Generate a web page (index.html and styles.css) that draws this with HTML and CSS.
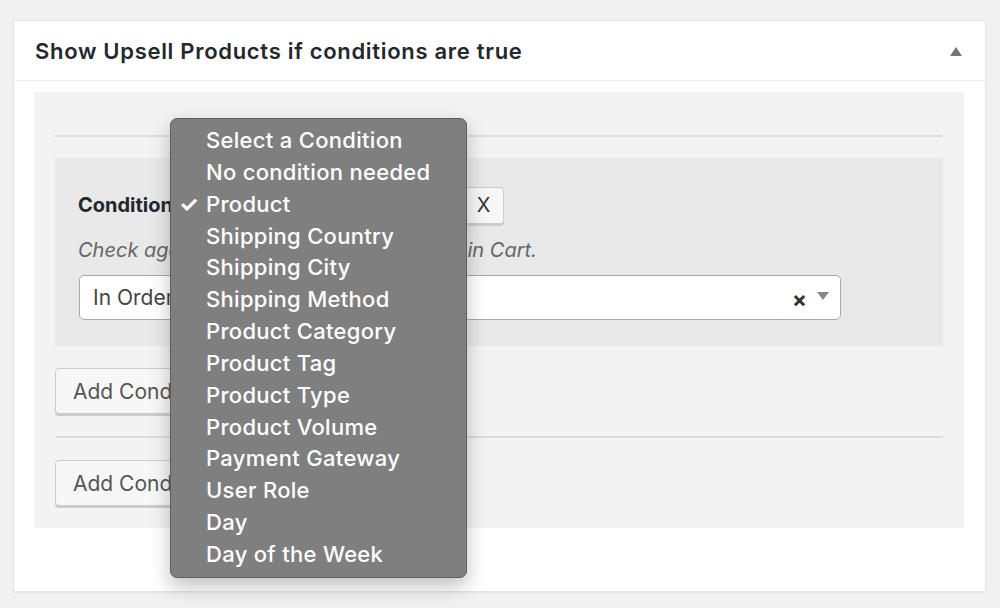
FILE: index.html
```html
<!DOCTYPE html>
<html>
<head>
<meta charset="utf-8">
<link rel="stylesheet" href="styles.css">
</head>
<body>
<div class="card">
  <div class="card-header">
    <h2 class="card-title">Show Upsell Products if conditions are true</h2>
    <span class="toggle"></span>
  </div>
  <div class="card-body">
    <div class="panel">
      <div class="sep first"></div>
      <div class="group">
        <div class="row">
          <span class="label">Condition:</span>
          <span class="native-select">Product</span>
          <button class="btn btn-x">X</button>
        </div>
        <p class="hint">Check against the Product(s) in Order or in Cart.</p>
        <div class="select2">
          <span class="s2-value">In Order</span>
          <span class="s2-clear">×</span>
          <span class="s2-arrow"></span>
        </div>
      </div>
      <button class="btn btn-add">Add Condition</button>
      <div class="sep"></div>
      <button class="btn btn-add">Add Condition Group</button>
    </div>
  </div>
</div>
<ul class="menu">
  <li>Select a Condition</li>
  <li>No condition needed</li>
  <li class="checked"><span class="check">✓</span>Product</li>
  <li>Shipping Country</li>
  <li>Shipping City</li>
  <li>Shipping Method</li>
  <li>Product Category</li>
  <li>Product Tag</li>
  <li>Product Type</li>
  <li>Product Volume</li>
  <li>Payment Gateway</li>
  <li>User Role</li>
  <li>Day</li>
  <li>Day of the Week</li>
</ul>
</body>
</html>
```

FILE: styles.css
```css
* { box-sizing: border-box; }
html, body { margin: 0; }
body {
  background: #f1f1f1;
  padding: 20px 14px 16px 13px;
  font-family: Inter, "Liberation Sans", sans-serif;
  color: #32373c;
  height: 608px;
  overflow: hidden;
}
.card {
  width: 973px;
  height: 572px;
  background: #fff;
  border: 1px solid #e5e5e5;
  box-shadow: 0 1px 1px rgba(0,0,0,0.04);
}
.card-header {
  height: 60px;
  border-bottom: 1px solid #eeeeee;
  display: flex;
  align-items: center;
  justify-content: space-between;
  padding: 0 23px 0 21px;
}
.card-title {
  margin: 0;
  font-size: 22px;
  font-weight: 600;
  color: #23282d;
  letter-spacing: 0.7px;
}
.toggle {
  width: 0; height: 0;
  border-left: 6px solid transparent;
  border-right: 6px solid transparent;
  border-bottom: 9px solid #72777c;
  margin-top: 2px;
}
.card-body {
  padding: 11px 21px 0 20px;
}
.panel {
  background: #f3f3f3;
  height: 436px;
  padding: 43px 21px 0 21px;
}
.sep {
  height: 2px;
  background: #dddddd;
  margin: 22px 0 22px;
}
.sep.first { margin: 0 0 21px; }
.group {
  background: #e9e9e9;
  padding: 28px 23px 26px 23px;
  height: 188px;
}
.row {
  display: flex;
  align-items: center;
  height: 38px;
}
.label {
  font-weight: 700;
  font-size: 20px;
  color: #23282d;
  width: 150px;
}
.native-select {
  width: 234px;
  font-size: 20px;
}
.btn {
  font-family: inherit;
  background: #f7f7f7;
  border: 1px solid #cccccc;
  border-radius: 4px;
  box-shadow: 0 2px 0 #cccccc;
  color: #555555;
  font-size: 21px;
  cursor: pointer;
}
.btn-x {
  width: 41px;
  height: 37px;
  padding: 0;
  margin-left: 1px;
  color: #333;
  font-size: 20px;
}
.hint {
  margin: 12px 0 0 0;
  font-size: 20px;
  font-style: italic;
  color: #666666;
  line-height: 28px;
  white-space: nowrap;
}
.select2 {
  margin: 11px 0 0 1px;
  width: 762px;
  height: 45px;
  background: #fff;
  border: 1px solid #aaaaaa;
  border-radius: 5px;
  display: flex;
  align-items: center;
  padding: 0 11px 0 13px;
}
.s2-value {
  flex: 1;
  font-size: 21px;
  color: #444;
}
.s2-clear {
  font-size: 22px;
  font-weight: 700;
  color: #333;
  margin-right: 10px;
  margin-top: 3px;
}
.s2-arrow {
  width: 0; height: 0;
  border-left: 6px solid transparent;
  border-right: 6px solid transparent;
  border-top: 8px solid #888888;
  margin-top: -4px;
}
.btn-add {
  display: block;
  height: 46px;
  margin-top: 22px;
  padding: 0 17px;
  text-align: left;
  width: 280px;
  color: #555;
}
.sep + .btn-add { margin-top: 0; }
.menu {
  position: absolute;
  left: 170px;
  top: 118px;
  width: 297px;
  height: 460px;
  margin: 0;
  padding: 6px 0 0 35px;
  list-style: none;
  background: #7f7f7f;
  border: 1px solid #5f5f5f;
  border-radius: 7px;
  box-shadow: 0 8px 20px rgba(0,0,0,0.25);
  color: #ffffff;
  font-size: 22px;
  font-weight: 500;
  letter-spacing: 0.3px;
  line-height: 31.85px;
}
.menu li { position: relative; white-space: nowrap; }
.check {
  position: absolute;
  left: -27px;
  font-size: 22px;
  font-weight: 700;
}
```
